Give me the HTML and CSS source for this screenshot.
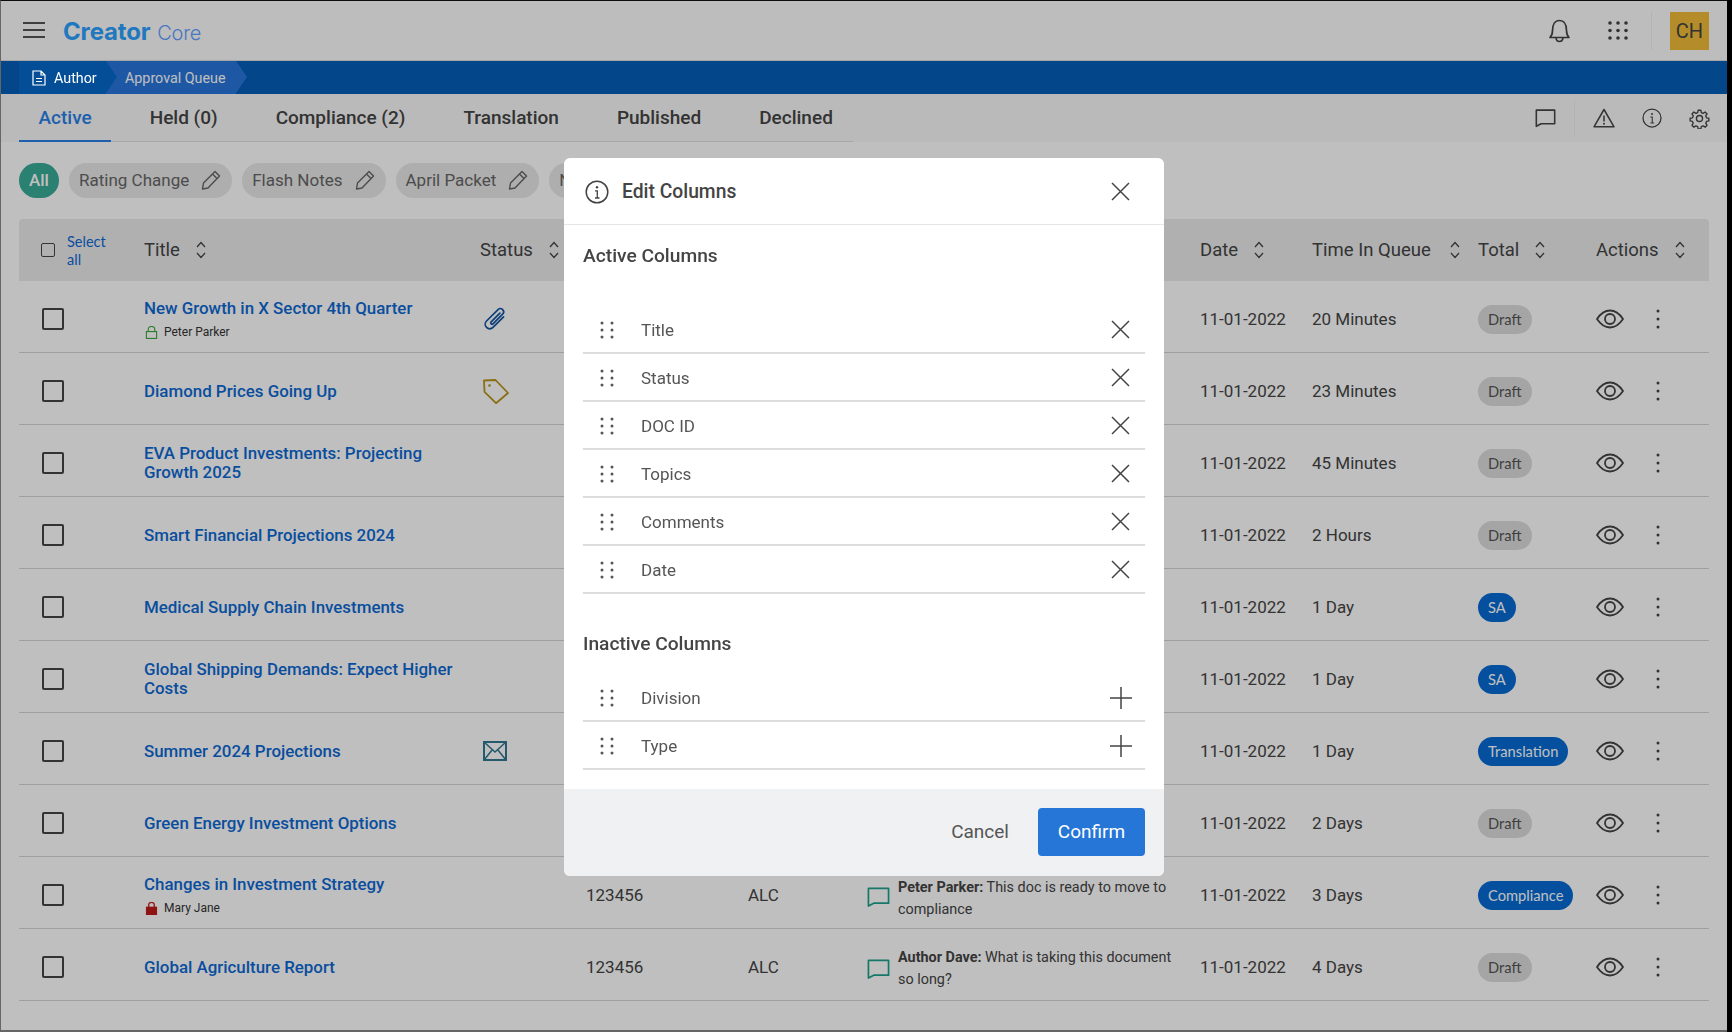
FILE: index.html
```html
<!DOCTYPE html>
<html lang="en">
<head>
<meta charset="utf-8">
<title>Approval Queue</title>
<link rel="stylesheet" href="styles.css">
</head>
<body>
<svg class="defs" width="0" height="0" aria-hidden="true">
  <symbol id="i-eye" viewBox="0 0 28 20"><path d="M1 10C5 4 9 1.500 14 1.500S23 4 27 10C23 16 19 18.500 14 18.500S5 16 1 10Z" fill="none" stroke="currentColor" stroke-width="1.800"/><circle cx="14" cy="10" r="5" fill="none" stroke="currentColor" stroke-width="1.800"/></symbol>
  <symbol id="i-kebab" viewBox="0 0 4 20"><circle cx="2" cy="2" r="1.500" fill="currentColor"/><circle cx="2" cy="10" r="1.500" fill="currentColor"/><circle cx="2" cy="18" r="1.500" fill="currentColor"/></symbol>
  <symbol id="i-sort" viewBox="0 0 10 18"><path d="M1 6l4-4.500L9 6M1 12l4 4.500L9 12" fill="none" stroke="currentColor" stroke-width="1.300"/></symbol>
  <symbol id="i-pencil" viewBox="0 0 20 20"><path d="M14 1.500l4.500 4.500L7 18l-5.500 1L2.500 13ZM11.500 4l4.500 4.500" fill="none" stroke="currentColor" stroke-width="1.400" stroke-linejoin="round"/></symbol>
  <symbol id="i-x" viewBox="0 0 19 19"><path d="M1 1l17 17M18 1L1 18" fill="none" stroke="currentColor" stroke-width="1.500"/></symbol>
  <symbol id="i-plus" viewBox="0 0 22 22"><path d="M11 0v22M0 11h22" fill="none" stroke="currentColor" stroke-width="1.500"/></symbol>
  <symbol id="i-drag" viewBox="0 0 14 18"><g fill="currentColor"><circle cx="2" cy="2" r="1.500"/><circle cx="12" cy="2" r="1.500"/><circle cx="2" cy="9" r="1.500"/><circle cx="12" cy="9" r="1.500"/><circle cx="2" cy="16" r="1.500"/><circle cx="12" cy="16" r="1.500"/></g></symbol>
  <symbol id="i-chat" viewBox="0 0 24 22"><path d="M1.500 2h21v15.500H7L1.500 20.500Z" fill="none" stroke="currentColor" stroke-width="1.800" stroke-linejoin="round"/></symbol>
  <symbol id="i-info" viewBox="0 0 24 24"><circle cx="12" cy="12" r="10.800" fill="none" stroke="currentColor" stroke-width="1.500"/><circle cx="12" cy="7.200" r="1.200" fill="currentColor"/><path d="M10 10.800h2.300v7M10 18h4.500" fill="none" stroke="currentColor" stroke-width="1.300"/></symbol>
  <symbol id="i-lock" viewBox="0 0 14 14"><path d="M3.500 6V3.500a3.500 3 0 0 1 7 0V6" fill="none" stroke="currentColor" stroke-width="1.200"/><rect x="1.500" y="6" width="11" height="7.400" fill="none" stroke="currentColor" stroke-width="1.200"/></symbol>
  <symbol id="i-lock-solid" viewBox="0 0 14 14"><path d="M4 6V3a3 2.500 0 0 1 6 0V6" fill="none" stroke="currentColor" stroke-width="1.400"/><rect x="1" y="5" width="12" height="9" fill="currentColor"/></symbol>
</svg>

<div class="page">
  <header class="topbar">
    <svg class="burger" width="22" height="16" viewBox="0 0 22 16"><path d="M0 1h22M0 8h22M0 15h22" stroke="currentColor" stroke-width="1.800"/></svg>
    <div class="logo"><span class="logo-strong">Creator</span> <span class="logo-light">Core</span></div>
    <div class="topbar-right">
      <svg class="bell" width="23" height="24" viewBox="0 0 23 24"><path d="M2 18.500c1.500-1.500 2.500-3 2.500-7C4.500 5.500 7 1.500 11.500 1.500S18.500 5.500 18.500 11.500c0 4 1 5.500 2.500 7ZM8 19c.3 2.500 1.800 3.500 3.500 3.500S14.700 21.500 15 19" fill="none" stroke="currentColor" stroke-width="1.700" stroke-linejoin="round"/></svg>
      <svg class="apps" width="20" height="19" viewBox="0 0 20 19"><g fill="currentColor"><circle cx="2" cy="2" r="1.800"/><circle cx="10" cy="2" r="1.800"/><circle cx="18" cy="2" r="1.800"/><circle cx="2" cy="9.500" r="1.800"/><circle cx="10" cy="9.500" r="1.800"/><circle cx="18" cy="9.500" r="1.800"/><circle cx="2" cy="17" r="1.800"/><circle cx="10" cy="17" r="1.800"/><circle cx="18" cy="17" r="1.800"/></g></svg>
      <span class="vdiv vdiv-top"></span>
      <div class="avatar">CH</div>
    </div>
  </header>

  <nav class="crumbbar">
    <div class="crumb crumb-author">
      <svg width="14" height="16" viewBox="0 0 14 16"><path d="M1 1h8l4 4v10H1ZM9 1v4h4M4 8.500h6M4 11.500h6" fill="none" stroke="currentColor" stroke-width="1.200"/></svg>
      <span>Author</span>
    </div>
    <div class="crumb crumb-queue"><span>Approval Queue</span></div>
  </nav>

  <section class="tabrow">
    <div class="tabs">
      <a class="tab tab-active">Active</a>
      <a class="tab">Held (0)</a>
      <a class="tab">Compliance (2)</a>
      <a class="tab">Translation</a>
      <a class="tab">Published</a>
      <a class="tab">Declined</a>
    </div>
    <div class="tab-tools">
      <svg class="tool" width="21" height="20"><use href="#i-chat"/></svg>
      <span class="vdiv vdiv-tab"></span>
      <svg class="tool" width="22" height="20" viewBox="0 0 22 20"><path d="M11 1.500L21 18.800H1ZM11 7.500v6" fill="none" stroke="currentColor" stroke-width="1.500" stroke-linejoin="round"/><circle cx="11" cy="15.800" r="1" fill="currentColor"/></svg>
      <svg class="tool tool-info" width="20" height="20"><use href="#i-info"/></svg>
      <svg class="tool tool-gear" width="21" height="21" viewBox="0 0 24 24"><path d="M12 8.500a3.500 3.500 0 1 0 0 7 3.500 3.500 0 0 0 0-7Z" fill="none" stroke="currentColor" stroke-width="1.600"/><path d="M10.300 1.500h3.400l.6 3 2.300 1 2.600-1.700 2.400 2.400-1.700 2.600 1 2.300 3 .6v3.400l-3 .6-1 2.300 1.700 2.600-2.400 2.400-2.600-1.700-2.300 1-.6 3h-3.400l-.6-3-2.300-1-2.600 1.700-2.400-2.400 1.700-2.600-1-2.300-3-.6v-3.400l3-.6 1-2.300-1.700-2.600 2.400-2.400 2.600 1.700 2.300-1Z" transform="translate(1.200 1.200) scale(.9)" fill="none" stroke="currentColor" stroke-width="1.700" stroke-linejoin="round"/></svg>
    </div>
  </section>

  <section class="chips">
    <span class="chip-all">All</span>
    <span class="chip">Rating Change <svg width="20" height="20"><use href="#i-pencil"/></svg></span>
    <span class="chip">Flash Notes <svg width="20" height="20"><use href="#i-pencil"/></svg></span>
    <span class="chip">April Packet <svg width="20" height="20"><use href="#i-pencil"/></svg></span>
    <span class="chip">New Chip <svg width="20" height="20"><use href="#i-pencil"/></svg></span>
  </section>

  <section class="table">
    <div class="thead grid">
      <div class="select-all"><span class="box box-sm"></span><span class="select-label">Select all</span></div>
      <div class="th">Title <svg width="10" height="18"><use href="#i-sort"/></svg></div>
      <div class="th">Status <svg width="10" height="18"><use href="#i-sort"/></svg></div>
      <div class="th">DOC ID</div>
      <div class="th">Topics</div>
      <div class="th">Comments</div>
      <div class="th">Date <svg width="10" height="18"><use href="#i-sort"/></svg></div>
      <div class="th th-time">Time In Queue <svg width="10" height="18"><use href="#i-sort"/></svg></div>
      <div class="th">Total <svg width="10" height="18"><use href="#i-sort"/></svg></div>
      <div class="th">Actions <svg width="10" height="18"><use href="#i-sort"/></svg></div>
    </div>

    <div class="row grid">
      <div class="cell-check"><span class="box"></span></div>
      <div class="title-cell"><a class="doc-link">New Growth in X Sector 4th Quarter</a><div class="owner"><svg class="lock-open" width="13" height="13"><use href="#i-lock"/></svg>Peter Parker</div></div>
      <div class="status-cell"><svg class="ic-clip" width="24" height="24" viewBox="0 0 24 24"><path transform="rotate(45 12 12) translate(12 12) scale(1.300) translate(-12 -11.800)" d="M15.500 6v11.500a3.500 3.500 0 0 1-7 0V5a2.500 2.500 0 0 1 5 0v10.500a1 1 0 0 1-2 0V6" fill="none" stroke="currentColor" stroke-width="1.300" stroke-linecap="round"/></svg></div>
      <div>123456</div>
      <div>ALC</div>
      <div class="comment"><svg class="ic-comment" width="23" height="22"><use href="#i-chat"/></svg><p class="comment-text"><b>Peter Parker:</b> This doc needs one final tip before review</p></div>
      <div>11-01-2022</div>
      <div>20 Minutes</div>
      <div><span class="badge badge-draft">Draft</span></div>
      <div class="actions"><svg class="eye" width="28" height="20"><use href="#i-eye"/></svg><svg class="kebab" width="4" height="20"><use href="#i-kebab"/></svg></div>
    </div>

    <div class="row grid">
      <div class="cell-check"><span class="box"></span></div>
      <div class="title-cell"><a class="doc-link">Diamond Prices Going Up</a></div>
      <div class="status-cell"><svg class="ic-tag" width="26" height="25" viewBox="0 0 26 25"><path d="M1 1.500L12.500 1 25 14 13 24.200 1.500 12.800Z" fill="none" stroke="currentColor" stroke-width="1.800" stroke-linejoin="round"/><circle cx="6.500" cy="6.500" r="1.300" fill="currentColor"/></svg></div>
      <div>123456</div><div>ALC</div><div></div>
      <div>11-01-2022</div>
      <div>23 Minutes</div>
      <div><span class="badge badge-draft">Draft</span></div>
      <div class="actions"><svg class="eye" width="28" height="20"><use href="#i-eye"/></svg><svg class="kebab" width="4" height="20"><use href="#i-kebab"/></svg></div>
    </div>

    <div class="row grid">
      <div class="cell-check"><span class="box"></span></div>
      <div class="title-cell"><a class="doc-link">EVA Product Investments: Projecting Growth 2025</a></div>
      <div></div>
      <div>123456</div><div>ALC</div><div></div>
      <div>11-01-2022</div>
      <div>45 Minutes</div>
      <div><span class="badge badge-draft">Draft</span></div>
      <div class="actions"><svg class="eye" width="28" height="20"><use href="#i-eye"/></svg><svg class="kebab" width="4" height="20"><use href="#i-kebab"/></svg></div>
    </div>

    <div class="row grid">
      <div class="cell-check"><span class="box"></span></div>
      <div class="title-cell"><a class="doc-link">Smart Financial Projections 2024</a></div>
      <div></div>
      <div>123456</div><div>ALC</div><div></div>
      <div>11-01-2022</div>
      <div>2 Hours</div>
      <div><span class="badge badge-draft">Draft</span></div>
      <div class="actions"><svg class="eye" width="28" height="20"><use href="#i-eye"/></svg><svg class="kebab" width="4" height="20"><use href="#i-kebab"/></svg></div>
    </div>

    <div class="row grid">
      <div class="cell-check"><span class="box"></span></div>
      <div class="title-cell"><a class="doc-link">Medical Supply Chain Investments</a></div>
      <div></div>
      <div>123456</div><div>ALC</div><div></div>
      <div>11-01-2022</div>
      <div>1 Day</div>
      <div><span class="badge badge-blue">SA</span></div>
      <div class="actions"><svg class="eye" width="28" height="20"><use href="#i-eye"/></svg><svg class="kebab" width="4" height="20"><use href="#i-kebab"/></svg></div>
    </div>

    <div class="row grid">
      <div class="cell-check"><span class="box"></span></div>
      <div class="title-cell"><a class="doc-link">Global Shipping Demands: Expect Higher Costs</a></div>
      <div></div>
      <div>123456</div><div>ALC</div><div></div>
      <div>11-01-2022</div>
      <div>1 Day</div>
      <div><span class="badge badge-blue">SA</span></div>
      <div class="actions"><svg class="eye" width="28" height="20"><use href="#i-eye"/></svg><svg class="kebab" width="4" height="20"><use href="#i-kebab"/></svg></div>
    </div>

    <div class="row grid">
      <div class="cell-check"><span class="box"></span></div>
      <div class="title-cell"><a class="doc-link">Summer 2024 Projections</a></div>
      <div class="status-cell"><svg class="ic-mail" width="24" height="20" viewBox="0 0 24 20"><rect x="1" y="1" width="22" height="18" fill="none" stroke="currentColor" stroke-width="2"/><path d="M1 1l11 10L23 1M1 19l8.500-10.500M23 19l-8.500-10.500" fill="none" stroke="currentColor" stroke-width="1.500"/></svg></div>
      <div>123456</div><div>ALC</div><div></div>
      <div>11-01-2022</div>
      <div>1 Day</div>
      <div><span class="badge badge-blue">Translation</span></div>
      <div class="actions"><svg class="eye" width="28" height="20"><use href="#i-eye"/></svg><svg class="kebab" width="4" height="20"><use href="#i-kebab"/></svg></div>
    </div>

    <div class="row grid">
      <div class="cell-check"><span class="box"></span></div>
      <div class="title-cell"><a class="doc-link">Green Energy Investment Options</a></div>
      <div></div>
      <div>123456</div><div>ALC</div><div></div>
      <div>11-01-2022</div>
      <div>2 Days</div>
      <div><span class="badge badge-draft">Draft</span></div>
      <div class="actions"><svg class="eye" width="28" height="20"><use href="#i-eye"/></svg><svg class="kebab" width="4" height="20"><use href="#i-kebab"/></svg></div>
    </div>

    <div class="row grid">
      <div class="cell-check"><span class="box"></span></div>
      <div class="title-cell"><a class="doc-link">Changes in Investment Strategy</a><div class="owner"><svg class="lock-closed" width="13" height="13"><use href="#i-lock-solid"/></svg>Mary Jane</div></div>
      <div></div>
      <div>123456</div><div>ALC</div>
      <div class="comment"><svg class="ic-comment" width="23" height="22"><use href="#i-chat"/></svg><p class="comment-text"><b>Peter Parker:</b> This doc is ready to move to compliance</p></div>
      <div>11-01-2022</div>
      <div>3 Days</div>
      <div><span class="badge badge-blue">Compliance</span></div>
      <div class="actions"><svg class="eye" width="28" height="20"><use href="#i-eye"/></svg><svg class="kebab" width="4" height="20"><use href="#i-kebab"/></svg></div>
    </div>

    <div class="row grid">
      <div class="cell-check"><span class="box"></span></div>
      <div class="title-cell"><a class="doc-link">Global Agriculture Report</a></div>
      <div></div>
      <div>123456</div><div>ALC</div>
      <div class="comment"><svg class="ic-comment" width="23" height="22"><use href="#i-chat"/></svg><p class="comment-text comment-text-up"><b>Author Dave:</b> What is taking this document so long?</p></div>
      <div>11-01-2022</div>
      <div>4 Days</div>
      <div><span class="badge badge-draft">Draft</span></div>
      <div class="actions"><svg class="eye" width="28" height="20"><use href="#i-eye"/></svg><svg class="kebab" width="4" height="20"><use href="#i-kebab"/></svg></div>
    </div>
  </section>
</div>

<div class="overlay"></div>

<div class="modal" role="dialog">
  <div class="modal-head">
    <svg class="modal-info" width="24" height="24"><use href="#i-info"/></svg>
    <h2 class="modal-title">Edit Columns</h2>
    <svg class="ic-x" width="19" height="19"><use href="#i-x"/></svg>
  </div>
  <div class="modal-body">
    <h3 class="group-title group-active">Active Columns</h3>
    <ul class="col-list">
      <li class="col-row"><svg class="drag" width="14" height="18"><use href="#i-drag"/></svg><span class="col-name">Title</span><svg class="ic-x" width="19" height="19"><use href="#i-x"/></svg></li>
      <li class="col-row"><svg class="drag" width="14" height="18"><use href="#i-drag"/></svg><span class="col-name">Status</span><svg class="ic-x" width="19" height="19"><use href="#i-x"/></svg></li>
      <li class="col-row"><svg class="drag" width="14" height="18"><use href="#i-drag"/></svg><span class="col-name">DOC ID</span><svg class="ic-x" width="19" height="19"><use href="#i-x"/></svg></li>
      <li class="col-row"><svg class="drag" width="14" height="18"><use href="#i-drag"/></svg><span class="col-name">Topics</span><svg class="ic-x" width="19" height="19"><use href="#i-x"/></svg></li>
      <li class="col-row"><svg class="drag" width="14" height="18"><use href="#i-drag"/></svg><span class="col-name">Comments</span><svg class="ic-x" width="19" height="19"><use href="#i-x"/></svg></li>
      <li class="col-row"><svg class="drag" width="14" height="18"><use href="#i-drag"/></svg><span class="col-name">Date</span><svg class="ic-x" width="19" height="19"><use href="#i-x"/></svg></li>
    </ul>
    <h3 class="group-title group-inactive">Inactive Columns</h3>
    <ul class="col-list">
      <li class="col-row"><svg class="drag" width="14" height="18"><use href="#i-drag"/></svg><span class="col-name">Division</span><svg class="ic-plus" width="22" height="22"><use href="#i-plus"/></svg></li>
      <li class="col-row"><svg class="drag" width="14" height="18"><use href="#i-drag"/></svg><span class="col-name">Type</span><svg class="ic-plus" width="22" height="22"><use href="#i-plus"/></svg></li>
    </ul>
  </div>
  <div class="modal-foot">
    <button class="btn-cancel">Cancel</button>
    <button class="btn-confirm">Confirm</button>
  </div>
</div>
</body>
</html>
```

FILE: styles.css
```css
* { box-sizing: border-box; }
html, body { margin: 0; height: 100%; }
body { font-family: Roboto, "Liberation Sans", sans-serif; color: #444; background: #000; overflow: hidden; }
.defs { position: absolute; }
svg { display: block; flex: none; }

.page { width: 1727px; height: 1032px; border-left: 1px solid #888; border-top: 1px solid #111; border-bottom: 2px solid #888; overflow: hidden; background: #fff; }

.topbar { height: 60px; display: flex; align-items: center; padding: 0 18px 0 22px; background: #fcfcfc; border-bottom: 1px solid #ddd; }
.burger { color: #555; margin-top: -1px; }
.logo { margin-left: 18px; font-family: Inter, sans-serif; font-size: 24px; line-height: 30px; color: #2ba0ff; margin-top: 4px; white-space: nowrap; }
.logo-strong { font-weight: 700; letter-spacing: -.15px; }
.logo-light { font-weight: 300; font-size: 20px; color: #629fff; letter-spacing: -.2px; }
.topbar-right { margin-left: auto; display: flex; align-items: center; color: #444; }
.bell { margin-right: 37px; }
.apps { margin-right: 23px; }
.vdiv { display: block; width: 1px; background: #efefef; }
.vdiv-top { height: 38px; margin-right: 18px; }
.avatar { width: 39px; height: 38px; background: #f1bd39; display: flex; align-items: center; justify-content: center; font-size: 20px; color: #444; }

.crumbbar { height: 33px; background: #055fb8; display: flex; padding-left: 18px; color: #fff; font-size: 14.3px; }
.crumb { display: flex; align-items: center; position: relative; }
.crumb-author { width: 87px; background: #044e98; padding-left: 13px; gap: 8px; z-index: 1; }
.crumb-author::after, .crumb-queue::after { content: ""; position: absolute; top: 0; left: 100%; border-top: 16.5px solid transparent; border-bottom: 16.5px solid transparent; border-left-width: 11px; border-left-style: solid; }
.crumb-author::after { border-left-color: #044e98; }
.crumb-queue { width: 130px; background: #2876dc; padding-left: 19px; }
.crumb-queue::after { border-left-color: #2876dc; }

.tabrow { height: 48px; display: flex; justify-content: space-between; background: #f9f9f9; padding-left: 18px; }
.tabs { display: flex; width: 834px; border-bottom: 1px solid #e0e0e0; gap: 19px; height: 48px; }
.tab { padding: 0 19.500px; font-size: 19px; font-weight: 500; line-height: 48px; color: #444; white-space: nowrap; }
.tab-active { color: #2a80e8; border-bottom: 2px solid #2a80e8; height: 48px; }
.tab-tools { display: flex; align-items: center; color: #444; padding-right: 17px; height: 48px; }
.vdiv-tab { height: 38px; margin: -1px 18px 0 18px; }
.tool-info { margin-left: 27px; }
.tool-gear { margin-left: 27px; }

.chips { display: flex; gap: 10px; padding: 21px 0 0 18px; height: 77px; align-items: flex-start; overflow: hidden; }
.chip-all { width: 40px; height: 35px; padding-bottom: 2px; border-radius: 18px; background: #38ab97; color: #fff; display: flex; align-items: center; justify-content: center; font-size: 17px; font-weight: 500; }
.chip { height: 35px; border-radius: 18px; background: #e8e8e8; color: #666; display: flex; align-items: center; gap: 12px; padding: 0 11px 2px 10px; font-size: 17px; white-space: nowrap; }

.table { margin: 0 18px; width: 1690px; }
.grid { display: grid; grid-template-columns: 125px 336px 106px 162px 119px 333px 112px 166px 118px 113px; align-items: center; }
.thead { height: 62px; background: #ebebec; border-radius: 4px 4px 0 0; font-size: 18.500px; color: #444; }
.th { display: flex; align-items: center; gap: 16px; white-space: nowrap; }
.th-time { gap: 19px; }
.select-all { display: flex; align-items: center; padding-left: 22px; gap: 12px; }
.select-label { font-family: Lato, sans-serif; font-size: 14.500px; line-height: 18px; color: #0d69d3; width: 45px; margin-top: 2px; }
.box { display: block; width: 22px; height: 22px; border: 2px solid #444; border-radius: 2px; }
.box-sm { width: 14px; height: 14px; flex: none; border-width: 1.500px; }

.row { height: 72px; padding-top: 5px; border-bottom: 1px solid #d4d4d4; font-size: 17px; color: #444; }
.cell-check { padding-left: 23px; }
.doc-link { display: block; color: #0d69d3; font-weight: 500; font-size: 16.900px; line-height: 19px; }
.title-cell { padding-right: 20px; }
.owner { display: flex; align-items: center; gap: 6px; margin: 7px 0 0 1px; font-size: 12px; line-height: 15px; color: #333; }
.lock-open { color: #3da63d; }
.lock-closed { color: #c01a1a; }
.status-cell { padding-left: 3px; }
.ic-clip { color: #1354a0; }
.ic-tag { color: #b8941a; }
.ic-mail { color: #307890; }
.comment { display: flex; gap: 8px; align-items: center; width: 318px; }
.ic-comment { color: #1fa08c; margin-top: 3px; }
.comment-text { margin: 7.600px 0 0; font-size: 14.400px; line-height: 22px; color: #444; }
.comment-text-up { margin-top: 3px; }
.comment-text b { font-weight: 700; }
.badge { display: inline-flex; align-items: center; height: 29px; padding: 0 10px; border-radius: 15px; font-family: Lato, sans-serif; font-size: 14.700px; }
.badge-draft { background: #ddd; color: #555; }
.badge-blue { background: #066bd4; color: #fff; }
.actions { display: flex; align-items: center; gap: 32px; color: #444; }

.overlay { position: fixed; inset: 0; background: rgba(0, 0, 0, .25); }

.modal { position: fixed; left: 564px; top: 158px; width: 600px; height: 718px; background: #fff; border-radius: 6px; overflow: hidden; display: flex; flex-direction: column; color: #444; }
.modal-head { height: 67px; flex: none; display: flex; align-items: center; padding: 1px 34px 0 21px; border-bottom: 1px solid #e6e6e6; }
.modal-info { margin-right: 13px; }
.modal-title { margin: 0; font-size: 19.300px; font-weight: 500; flex: 1; }
.ic-x { color: #444; }
.modal-body { flex: 1; padding: 0 19px; }
.group-title { margin: 0; font-size: 19.200px; font-weight: 500; line-height: 24px; }
.group-active { padding: 19px 0 37px; height: 81px; }
.group-inactive { padding: 38px 0 6px; height: 80px; }
.col-list { list-style: none; margin: 0; padding: 0; }
.col-row { height: 48px; display: flex; align-items: center; border-bottom: 2px solid #ddd; padding: 1px 15px 0 17px; font-size: 17px; color: #555; }
.col-name { flex: 1; margin-left: 27px; }
.drag { color: #555; }
.ic-plus { color: #444; margin-right: -2px; }
.modal-foot { height: 87px; flex: none; background: #f0f1f3; display: flex; align-items: center; justify-content: flex-end; gap: 29px; padding: 0 19px 2px 0; }
.btn-cancel { border: 0; background: none; padding: 0; font: 400 19px Roboto, sans-serif; color: #555; }
.btn-confirm { border: 0; width: 107px; height: 48px; border-radius: 4px; background: #2676d8; color: #fff; font: 400 19px Roboto, sans-serif; }
```
